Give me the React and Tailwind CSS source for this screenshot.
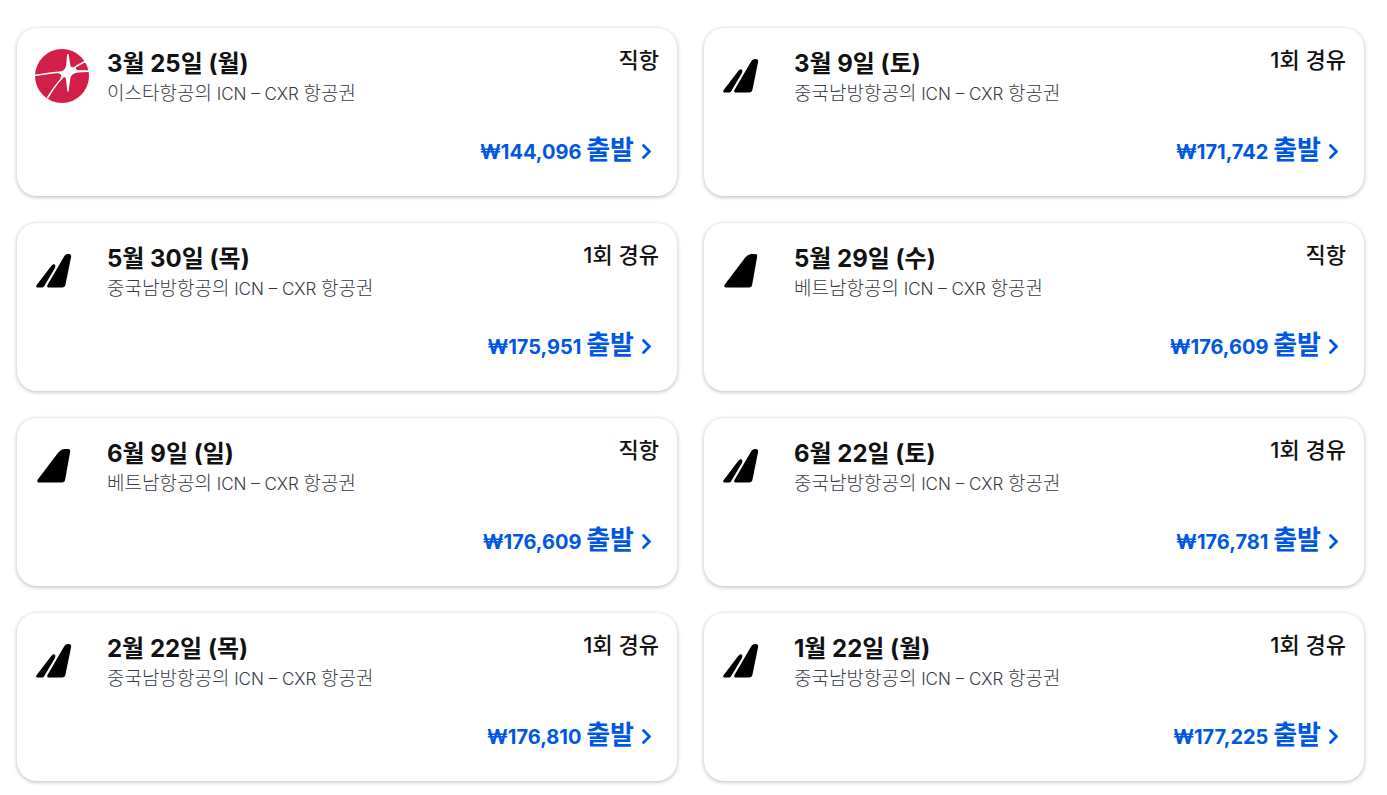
const flights = [
  { id: 1, logo: 'eastar', date: '3월 25일 (월)', airline: '이스타항공', stops: '직항', price: '₩144,096' },
  { id: 2, logo: 'split', date: '3월 9일 (토)', airline: '중국남방항공', stops: '1회 경유', price: '₩171,742' },
  { id: 3, logo: 'split', date: '5월 30일 (목)', airline: '중국남방항공', stops: '1회 경유', price: '₩175,951' },
  { id: 4, logo: 'tail', date: '5월 29일 (수)', airline: '베트남항공', stops: '직항', price: '₩176,609' },
  { id: 5, logo: 'tail', date: '6월 9일 (일)', airline: '베트남항공', stops: '직항', price: '₩176,609' },
  { id: 6, logo: 'split', date: '6월 22일 (토)', airline: '중국남방항공', stops: '1회 경유', price: '₩176,781' },
  { id: 7, logo: 'split', date: '2월 22일 (목)', airline: '중국남방항공', stops: '1회 경유', price: '₩176,810' },
  { id: 8, logo: 'split', date: '1월 22일 (월)', airline: '중국남방항공', stops: '1회 경유', price: '₩177,225' },
];

const AirlineLogo = ({ type }) => {
  if (type === 'eastar') {
    return (
      <svg viewBox="0 0 54 54" className="h-[54px] w-[54px]" aria-hidden="true">
        <circle cx="27" cy="27" r="27" fill="#d21f47" />
        <g fill="none" stroke="#fff" strokeWidth="1.5">
          <path d="M0 26.3C10 25 21 23.2 32 22.8S48 21.8 54 22.2" />
          <path d="M12.5 49C18 39.5 26 29 34 22.5 39 18.5 44 15.3 50 12.5" />
        </g>
        <path
          fill="#fff"
          d="M32.200 5h1.300C34.500 9 34.700 14.500 35.700 17.500C37 18.800 39.500 18.200 42 17C40.500 19 40.500 20.300 42.500 21.300L53 21.800V23L42 23.600C38 24.500 35.700 26.500 35.200 30L33.600 42.500H32.300L31 30.500C30.600 27.800 29 27.300 25 29.500C27 26.500 26.500 24.800 22 23.800C27.500 22.800 30.200 20.500 31 17C31.700 13.500 31.600 9 32.200 5Z"
        />
      </svg>
    );
  }

  return (
    <svg viewBox="0 0 54 54" className="h-[54px] w-[54px]" aria-hidden="true">
      {type === 'split' ? (
        <>
          <path d="M2.500 43.500C1 43.500.8 42.200 1.700 41L16.200 22.100C18.300 19.200 21 19.700 20.200 23.200 19.900 24.200 19.400 25 18.800 26L9.300 42C8.500 43.200 7.800 43.500 6.700 43.500Z" />
          <path d="M13.400 43.500C12.100 43.500 11.800 42 12.600 40.800L28.500 13.500C30 10.800 31.200 10 33.500 10 35.600 10 36.500 11 36.100 13L30.500 40.500C30 42.700 29 43.500 27 43.500Z" />
        </>
      ) : (
        <path d="M4 43.500C2.300 43.500 1.700 42 2.800 40.500L22.500 14.500C25.500 10.800 27.500 10 31 10H33C35 10 35.400 11 35.100 13L30.200 40.500C29.800 42.700 28.800 43.500 26.800 43.500Z" />
      )}
    </svg>
  );
};

const FlightCard = ({ flight }) => (
  <a
    href="#"
    className="flex min-h-[168px] flex-col justify-between rounded-[20px] bg-white px-[18px] pt-[18px] pb-7 shadow-[0_1px_4px_rgba(0,0,0,0.28)]"
  >
    <div className="flex items-start">
      <div className="mt-[3px] mr-[18px] shrink-0">
        <AirlineLogo type={flight.logo} />
      </div>
      <div className="min-w-0 flex-1">
        <h3 className="text-2xl leading-9 font-bold text-[#111]">{flight.date}</h3>
        <p className="text-[19px] leading-6 font-light text-[#353b47]">
          {flight.airline}의<span className="text-[17px]"> ICN – CXR </span>항공권
        </p>
      </div>
      <p className="text-[22px] leading-7 font-medium text-[#111]">{flight.stops}</p>
    </div>
    <div className="flex items-center justify-end gap-2 pr-2 text-[#0057e3]">
      <span className="text-xl leading-8 font-bold">
        {flight.price} <span className="text-[26px]">출발</span>
      </span>
      <svg viewBox="0 0 9 16" className="h-4 w-[9px]" fill="none" aria-hidden="true">
        <path d="M1.500 2.500L7.500 8.500L1.500 14.500" stroke="currentColor" strokeWidth="2.800" strokeLinecap="round" strokeLinejoin="round" />
      </svg>
    </div>
  </a>
);

const App = () => {
  return (
    <main className="min-h-screen bg-white pt-7 pr-[23px] pb-3 pl-[17px] font-['Inter','Noto_Sans_CJK_KR',sans-serif]">
      <div className="grid grid-cols-2 gap-[27px]">
        {flights.map((flight) => (
          <FlightCard key={flight.id} flight={flight} />
        ))}
      </div>
    </main>
  );
};

export default App;
